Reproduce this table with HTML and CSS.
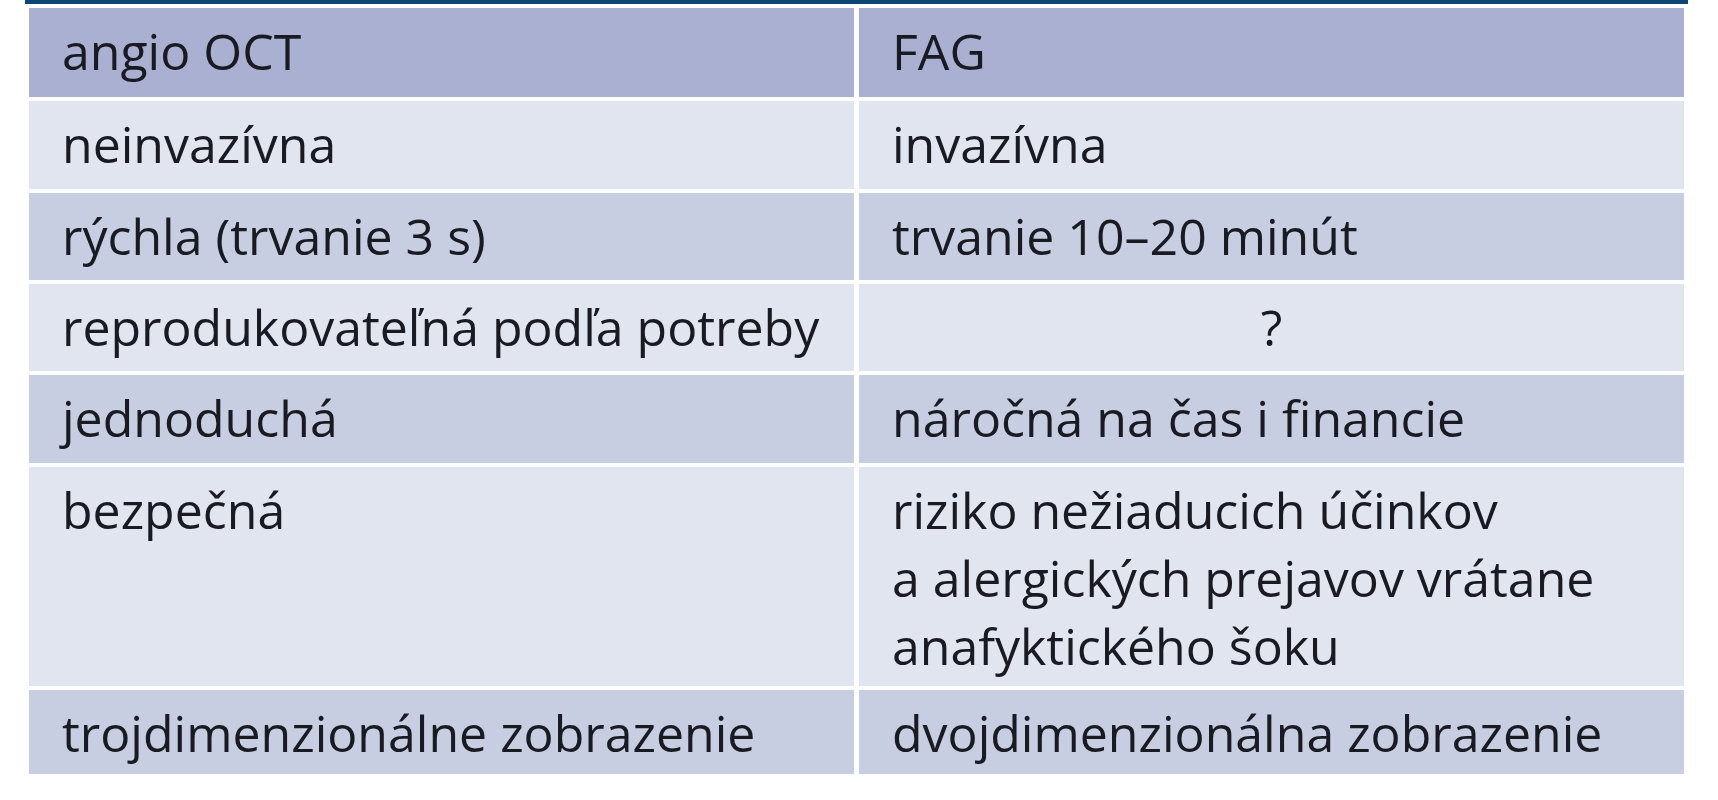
FILE: index.html
```html
<!DOCTYPE html>
<html lang="sk">
<head>
<meta charset="utf-8">
<title>angio OCT vs FAG</title>
<link rel="stylesheet" href="styles.css">
</head>
<body>
<div class="page">
  <div class="topbar"></div>
  <table class="cmp">
    <thead>
      <tr class="head">
        <th>angio OCT</th>
        <th>FAG</th>
      </tr>
    </thead>
    <tbody>
      <tr class="light r1">
        <td>neinvazívna</td>
        <td>invazívna</td>
      </tr>
      <tr class="dark r2">
        <td>rýchla (trvanie 3 s)</td>
        <td>trvanie 10–20 minút</td>
      </tr>
      <tr class="light r3">
        <td>reprodukovateľná podľa potreby</td>
        <td class="center">?</td>
      </tr>
      <tr class="dark r4">
        <td>jednoduchá</td>
        <td>náročná na čas i financie</td>
      </tr>
      <tr class="light r5">
        <td>bezpečná</td>
        <td>riziko nežiaducich účinkov<br>a alergických prejavov vrátane<br>anafyktického šoku</td>
      </tr>
      <tr class="dark r6">
        <td>trojdimenzionálne zobrazenie</td>
        <td>dvojdimenzionálna zobrazenie</td>
      </tr>
    </tbody>
  </table>
</div>
</body>
</html>
```
FILE: styles.css
```css
html, body {
  margin: 0;
  padding: 0;
  background: #ffffff;
}

.page {
  padding-left: 24px;
  width: 1665px;
}

.topbar {
  height: 4px;
  margin-left: 1px;
  width: 1663px;
  background: #0b4677;
}

.cmp {
  border-collapse: separate;
  border-spacing: 5px 4px;
  table-layout: fixed;
  width: 1665px;
  font-family: "Open Sans", Lato, sans-serif;
  font-size: 50px;
  line-height: 68px;
  letter-spacing: 0;
  color: #1a1a22;
}

.cmp th,
.cmp td {
  width: 825px;
  text-align: left;
  vertical-align: top;
  font-weight: 500;
  padding: 9px 0 0 33px;
  box-sizing: border-box;
}

.cmp td.center {
  text-align: center;
  padding-left: 0;
}

.head th {
  background: #aab0d2;
  height: 89px;
}

.light td {
  background: #e1e5f0;
}

.dark td {
  background: #c7cee1;
}

.r1 td { height: 88px; }
.r2 td { height: 87px; }
.r3 td { height: 87px; }
.r4 td { height: 88px; }
.r5 td { height: 219px; }
.r6 td { height: 84px; }
```
